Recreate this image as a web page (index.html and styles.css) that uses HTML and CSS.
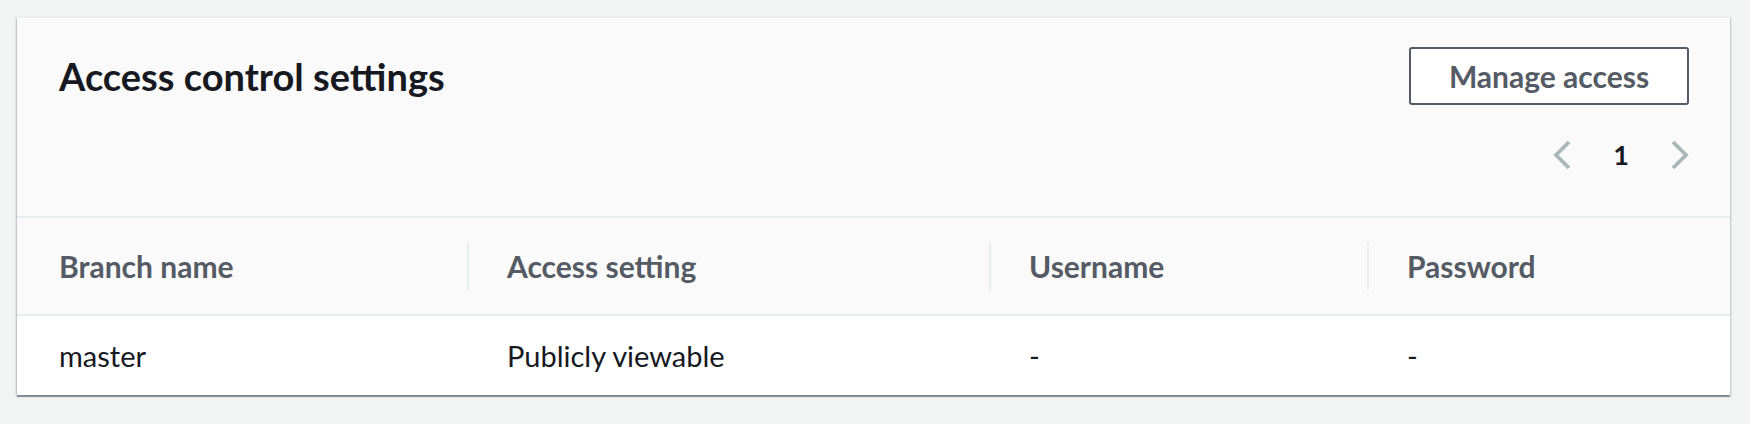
FILE: index.html
```html
<!DOCTYPE html>
<html lang="en">
<head>
<meta charset="utf-8">
<title>Access control settings</title>
<link rel="stylesheet" href="styles.css">
</head>
<body>
<div class="card">
  <div class="card-header">
    <div class="header-top">
      <h2 class="title">Access control settings</h2>
      <button class="btn" type="button">Manage access</button>
    </div>
    <div class="pager">
      <svg class="chev" width="18" height="30" viewBox="0 0 18 30" aria-hidden="true"><polyline points="16,2 3,15 16,28"/></svg>
      <span class="page-num">1</span>
      <svg class="chev" width="18" height="30" viewBox="0 0 18 30" aria-hidden="true"><polyline points="2,2 15,15 2,28"/></svg>
    </div>
  </div>
  <div class="table">
    <div class="th first">Branch name</div>
    <div class="th sep">Access setting</div>
    <div class="th sep">Username</div>
    <div class="th sep">Password</div>
    <div class="td first">master</div>
    <div class="td">Publicly viewable</div>
    <div class="td">-</div>
    <div class="td">-</div>
  </div>
</div>
</body>
</html>
```

FILE: styles.css
```css
* { box-sizing: border-box; }

html, body {
  margin: 0;
  padding: 0;
  background: #f2f3f3;
  font-family: "Lato", "Open Sans", sans-serif;
  color: #16191f;
}

body {
  width: 1750px;
  height: 424px;
  overflow: hidden;
}

.card {
  margin: 17px 20px 0 17px;
  background: #fafafa;
  border-top: 1px solid #eaeded;
  box-shadow: 0 2px 1px 0 rgba(0, 28, 36, 0.35),
              1px 1px 2px 0 rgba(0, 28, 36, 0.15),
              -1px 1px 2px 0 rgba(0, 28, 36, 0.2);
}

.card-header {
  height: 200px;
  padding: 29px 41px 0 42px;
  border-bottom: 2px solid #eaeded;
}

.header-top {
  display: flex;
  justify-content: space-between;
  align-items: center;
  height: 58px;
}

.title {
  margin: 0;
  font-size: 38px;
  line-height: 46px;
  font-weight: 700;
  color: #16191f;
}

.btn {
  width: 280px;
  height: 58px;
  padding: 0;
  background: #fff;
  border: 2px solid #545b64;
  border-radius: 3px;
  color: #545b64;
  font-family: inherit;
  font-size: 30px;
  line-height: 36px;
  font-weight: 700;
}

.pager {
  display: flex;
  justify-content: flex-end;
  align-items: center;
  gap: 30px;
  height: 40px;
  margin-top: 30px;
}

.chev {
  display: block;
}

.chev polyline {
  fill: none;
  stroke: #aab7b8;
  stroke-width: 3.8;
}

.page-num {
  width: 40px;
  text-align: center;
  font-size: 27px;
  line-height: 34px;
  font-weight: 700;
  color: #16191f;
}

.table {
  display: grid;
  grid-template-columns: 450px 522px 378px 1fr;
}

.th, .td {
  display: flex;
  align-items: center;
  padding-left: 40px;
  font-size: 29px;
  line-height: 36px;
}

.th {
  position: relative;
  height: 98px;
  background: #fafafa;
  border-bottom: 2px solid #eaeded;
  color: #545b64;
  font-size: 30px;
  font-weight: 700;
}

.th.sep::before {
  content: "";
  position: absolute;
  left: 0;
  top: 24px;
  width: 2px;
  height: 48px;
  background: #eaeded;
}

.td {
  height: 79px;
  background: #fff;
  color: #16191f;
}

.first {
  padding-left: 42px;
}
```
